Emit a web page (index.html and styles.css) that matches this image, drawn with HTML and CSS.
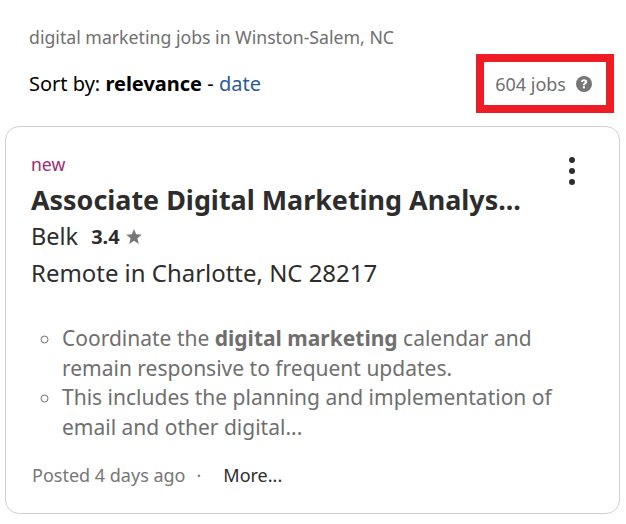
FILE: index.html
```html
<!DOCTYPE html>
<html lang="en">
<head>
    <meta charset="UTF-8">
    <title>digital marketing jobs</title>
    <link rel="stylesheet" href="styles.css">
</head>
<body>
    <section class="head">
        <h1 class="query">digital marketing jobs in Winston-Salem, NC</h1>
        <div class="sort-row">
            <div class="sort">Sort by: <b>relevance</b> - <a href="#">date</a></div>
            <div class="count">
                <span>604 jobs</span>
                <svg class="help" width="16" height="16" viewBox="0 0 16 16">
                    <circle cx="8" cy="8" r="8" fill="#767676"/>
                    <path d="M4.9 6.1C5 4.2 6.3 3.2 8.1 3.2c1.9 0 3.1 1 3.1 2.6 0 1.1-.6 1.7-1.4 2.2-.7.4-.9.7-.9 1.3H6.8c0-1.2.3-1.8 1.2-2.4.6-.4.9-.6.9-1.1 0-.4-.3-.7-.9-.7-.6 0-1 .4-1.1 1z" fill="#fff"/>
                    <rect x="6.8" y="10.2" width="2.1" height="2.2" fill="#fff"/>
                </svg>
            </div>
        </div>
    </section>
    <article class="card">
        <div class="new">new</div>
        <h2 class="title">Associate Digital Marketing Analys...</h2>
        <div class="company">
            <span class="name">Belk</span>
            <span class="rating">3.4</span>
            <svg class="star" width="16" height="15" viewBox="0 0 16 15"><path d="M8 0l2.1 5.3 5.7.4-4.4 3.6 1.4 5.6L8 11.8 3.2 14.9l1.4-5.6L.2 5.7l5.7-.4z" fill="#767676"/></svg>
        </div>
        <div class="location">Remote in Charlotte, NC 28217</div>
        <ul class="snippet">
            <li>Coordinate the <b>digital marketing</b> calendar and remain responsive to frequent updates.</li>
            <li>This includes the planning and implementation of email and other digital...</li>
        </ul>
        <div class="foot">
            <span class="date">Posted 4 days ago</span>
            <span class="dot">·</span>
            <a class="more" href="#">More...</a>
        </div>
        <button class="menu" aria-label="menu"><i></i><i></i><i></i></button>
    </article>
</body>
</html>
```

FILE: styles.css
```css
/* reset */
body{
    margin: 0;
    font-family: "Noto Sans", sans-serif;
    background: #fff;
    color: #2d2d2d;
}
a{
    text-decoration: none;
}
/* head */
.head{
    padding: 25px 12px 0 29px;
}
.query{
    margin: 0;
    font-size: 17.7px;
    font-weight: 400;
    line-height: 24px;
    color: #6f6f6f;
}
.sort-row{
    display: flex;
    justify-content: space-between;
    align-items: center;
    margin-top: 5px;
}
.sort{
    font-size: 20px;
    color: #000;
}
.sort a{
    color: #2d5a9a;
}
.count{
    display: flex;
    align-items: center;
    gap: 10px;
    height: 43px;
    padding: 0 14px 0 11px;
    border: 8px solid #ee1c25;
    font-size: 18px;
    color: #6f6f6f;
}
/* card */
.card{
    position: relative;
    margin: 13px 6px 0 5px;
    height: 388px;
    padding: 24px 25px 0;
    box-sizing: border-box;
    border: 1px solid #d0d0d0;
    border-radius: 14px;
}
.new{
    margin-bottom: 5px;
    font-size: 17.6px;
    line-height: 26px;
    color: #9d2b6b;
}
.title{
    margin: 0;
    font-size: 26.9px;
    font-weight: 700;
    line-height: 36px;
    color: #2d2d2d;
}
.company{
    display: flex;
    align-items: center;
    height: 36px;
    font-size: 23.5px;
}
.rating{
    margin-left: 13px;
    font-size: 20px;
    font-weight: 700;
}
.star{
    margin-left: 6px;
}
.location{
    font-size: 23.95px;
    line-height: 38px;
}
.snippet{
    margin: 32px 0 0;
    padding: 0 0 0 31px;
    list-style: circle;
    font-size: 21px;
    line-height: 29.7px;
    color: #6f6f6f;
}
.foot{
    display: flex;
    align-items: center;
    margin-top: 20px;
    padding-left: 1px;
    font-size: 18px;
    line-height: 24px;
    color: #767676;
}
.dot{
    margin: 0 22px 0 11px;
}
.more{
    color: #2d2d2d;
}
/* kebab sits over the card corner */
.menu{
    position: absolute;
    top: 30px;
    right: 44px;
    display: flex;
    flex-direction: column;
    gap: 5px;
    padding: 0;
    border: 0;
    background: none;
}
.menu i{
    width: 6px;
    height: 6px;
    border-radius: 50%;
    background: #2d2d2d;
}
```
